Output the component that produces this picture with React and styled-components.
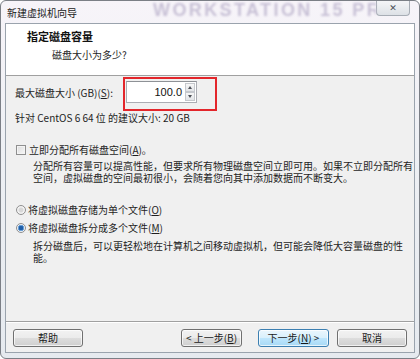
import styled, { createGlobalStyle } from "styled-components"

const Global = createGlobalStyle`
  html, body {
    margin: 0;
    padding: 0;
    background: #ffffff;
  }
  body {
    font-family: "Noto Sans CJK SC", "Noto Sans", sans-serif;
    font-size: 10px;
    color: #1e1e1e;
  }
`

const Window = styled.div`
  box-sizing: border-box;
  width: 420px;
  height: 359px;
  border: 1px solid #7b7f86;
  border-radius: 6px;
  background: linear-gradient(180deg, #f7f4f9 0%, #eef0f4 40%, #e6eaef 100%);
  display: flex;
  flex-direction: column;
  padding: 0 4px 5px 4px;
  overflow: hidden;
`

const TitleBar = styled.div`
  height: 22px;
  display: flex;
  align-items: flex-start;
  flex-shrink: 0;
`

const Title = styled.div`
  font-size: 10px;
  line-height: 14px;
  margin: 5px 0 0 2px;
  color: #222;
  white-space: nowrap;
`

const Watermark = styled.div`
  flex: 1;
  overflow: hidden;
  white-space: nowrap;
  margin-left: 76px;
  font-family: "Liberation Sans", Arial, sans-serif;
  font-weight: bold;
  font-size: 18px;
  line-height: 19px;
  letter-spacing: 2.4px;
  color: #c8c1d6;
  filter: blur(0.8px);
`

const CloseBtn = styled.div`
  width: 34px;
  height: 15px;
  margin-right: 5px;
  box-sizing: border-box;
  border: 1px solid #a7adb5;
  border-top: none;
  border-radius: 0 0 4px 4px;
  background: linear-gradient(180deg, #f4f5f7 0%, #dde1e6 100%);
  display: flex;
  align-items: center;
  justify-content: center;
  font-family: "DejaVu Sans", sans-serif;
  font-weight: bold;
  font-size: 9px;
  color: #4a4f57;
`

const Content = styled.div`
  flex: 1;
  border: 1px solid #9aa3ad;
  background: #f0f0f0;
  display: flex;
  flex-direction: column;
`

const Header = styled.div`
  height: 45px;
  flex-shrink: 0;
  background: #ffffff;
  border-bottom: 1px solid #a0a0a0;
  padding: 6px 0 0 21px;
  box-sizing: content-box;
`

const Heading = styled.div`
  font-size: 11px;
  font-weight: bold;
  line-height: 13px;
  color: #111;
`

const Subtitle = styled.div`
  font-size: 10px;
  line-height: 13px;
  margin: 5px 0 0 25px;
`

const Body = styled.div`
  flex: 1;
  padding: 5px 0 0 9px;
`

const SizeRow = styled.div`
  display: flex;
  align-items: center;
  height: 22px;
`

const Label = styled.div`
  width: 111px;
  line-height: 13px;
`

const InputWrap = styled.div`
  position: relative;
`

const Input = styled.div`
  box-sizing: border-box;
  width: 71px;
  height: 22px;
  background: #fff;
  border: 1px solid #abadb3;
  border-top-color: #8e9196;
  display: flex;
  align-items: center;
  justify-content: flex-end;
  padding-right: 1px;
  gap: 3px;
`

const Value = styled.span`
  font-family: "Liberation Sans", Arial, sans-serif;
  font-size: 11px;
  color: #111;
`

const Spinner = styled.div`
  display: flex;
  flex-direction: column;
  width: 10px;
  height: 18px;
`

const SpinPart = styled.div`
  flex: 1;
  box-sizing: border-box;
  border: 1px solid #c5c8cd;
  background: linear-gradient(180deg, #f7f7f7, #e2e4e7);
  display: flex;
  align-items: center;
  justify-content: center;
  &::after {
    content: "";
    border-left: 2.5px solid transparent;
    border-right: 2.5px solid transparent;
    ${(p) => (p.$up ? "border-bottom: 3px solid #4d5057;" : "border-top: 3px solid #4d5057;")}
  }
`

const Highlight = styled.div`
  position: absolute;
  top: -4px;
  left: -3px;
  width: 94px;
  height: 34px;
  box-sizing: border-box;
  border: 2px solid #e3262b;
  pointer-events: none;
`

const Line = styled.div`
  line-height: 13px;
  margin-top: ${(p) => p.$mt || 0}px;
  white-space: nowrap;
`

const OptionRow = styled.div`
  display: flex;
  align-items: center;
  gap: ${(p) => p.$gap || 3}px;
  line-height: 13px;
  margin-top: ${(p) => p.$mt || 0}px;
  padding-left: 1px;
`

const Check = styled.span`
  width: 10px;
  height: 10px;
  box-sizing: border-box;
  border: 1px solid #8f8f8f;
  background: linear-gradient(135deg, #dcdcdc, #f8f8f8);
  box-shadow: inset 0 0 0 1px #f4f4f4;
`

const Radio = styled.span`
  width: 10px;
  height: 10px;
  box-sizing: border-box;
  border-radius: 50%;
  border: 1px solid #8f8f8f;
  background: ${(p) =>
    p.$on
      ? "radial-gradient(circle, #1f5fa8 0 2px, #6fa3d9 2.6px 3px, #eef2f6 3.4px)"
      : "radial-gradient(circle, #d8d8d8 0 2px, #f3f3f3 3px)"};
`

const Para = styled.p`
  margin: ${(p) => p.$mt || 0}px 0 0 18px;
  line-height: 12px;
  font-size: 10px;
  white-space: nowrap;
`

const Footer = styled.div`
  flex-shrink: 0;
  border-top: 1px solid #a0a0a0;
  box-shadow: inset 0 1px 0 #ffffff;
  display: flex;
  align-items: flex-start;
  padding: 7px 7px 0 7px;
  box-sizing: border-box;
  height: 31px;
`

const Button = styled.div`
  box-sizing: border-box;
  width: ${(p) => p.$w}px;
  height: 18px;
  margin-left: ${(p) => p.$ml || 0}px;
  border: 1px solid ${(p) => (p.$primary ? "#3c7fb1" : "#707070")};
  border-radius: 3px;
  background: ${(p) =>
    p.$primary
      ? "linear-gradient(180deg, #eaf6fd 0%, #d9f0fc 50%, #bee6fd 51%, #a7d9f5 100%)"
      : "linear-gradient(180deg, #f2f2f2 0%, #ebebeb 50%, #dddddd 51%, #cfcfcf 100%)"};
  box-shadow: inset 0 0 0 1px rgba(255, 255, 255, 0.7);
  display: flex;
  align-items: center;
  justify-content: center;
  font-size: 10px;
  line-height: 12px;
  color: #1a1a1a;
  white-space: nowrap;
`

const Spacer = styled.div`
  flex: 1;
`

export default function App() {
  return (
    <>
      <Global />
      <Window>
        <TitleBar>
          <Title>新建虚拟机向导</Title>
          <Watermark>WORKSTATION 15 PRO</Watermark>
          <CloseBtn>✕</CloseBtn>
        </TitleBar>
        <Content>
          <Header>
            <Heading>指定磁盘容量</Heading>
            <Subtitle>磁盘大小为多少?</Subtitle>
          </Header>
          <Body>
            <SizeRow>
              <Label>
                最大磁盘大小 (GB)(<u>S</u>):
              </Label>
              <InputWrap>
                <Input>
                  <Value>100.0</Value>
                  <Spinner>
                    <SpinPart $up />
                    <SpinPart />
                  </Spinner>
                </Input>
                <Highlight />
              </InputWrap>
            </SizeRow>
            <Line $mt={8}>针对 CentOS 6 64 位 的建议大小: 20 GB</Line>
            <OptionRow $mt={19} $gap={3}>
              <Check />
              <span>
                立即分配所有磁盘空间(<u>A</u>)。
              </span>
            </OptionRow>
            <Para $mt={4}>
              分配所有容量可以提高性能，但要求所有物理磁盘空间立即可用。如果不立即分配所有
              <br />
              空间，虚拟磁盘的空间最初很小，会随着您向其中添加数据而不断变大。
            </Para>
            <OptionRow $mt={19} $gap={2}>
              <Radio />
              <span>
                将虚拟磁盘存储为单个文件(<u>O</u>)
              </span>
            </OptionRow>
            <OptionRow $mt={5} $gap={2}>
              <Radio $on />
              <span>
                将虚拟磁盘拆分成多个文件(<u>M</u>)
              </span>
            </OptionRow>
            <Para $mt={6}>
              拆分磁盘后，可以更轻松地在计算机之间移动虚拟机，但可能会降低大容量磁盘的性
              <br />
              能。
            </Para>
          </Body>
          <Footer>
            <Button $w={70}>帮助</Button>
            <Spacer />
            <Button $w={61}>
              &lt; 上一步(<u>B</u>)
            </Button>
            <Button $w={71} $ml={16} $primary>
              下一步(<u>N</u>) &gt;
            </Button>
            <Button $w={70} $ml={8}>
              取消
            </Button>
          </Footer>
        </Content>
      </Window>
    </>
  )
}
